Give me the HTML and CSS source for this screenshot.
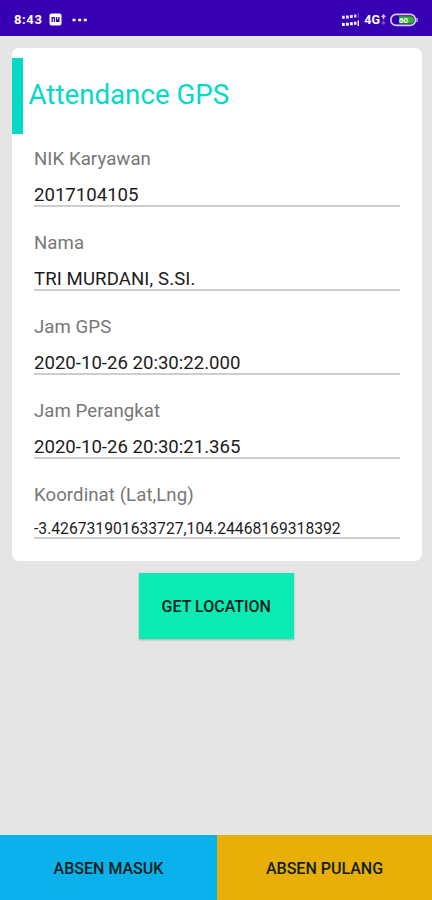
FILE: index.html
```
<!DOCTYPE html>
<html lang="id">
<head>
    <meta charset="UTF-8">
    <meta name="viewport" content="width=device-width, initial-scale=1.0">
    <title>Attendance GPS</title>
    <link rel="stylesheet" href="styles.css">
</head>
<body>
    <header class="status-bar">
        <div class="status-left">
            <span class="clock">8:43</span>
            <svg class="app-icon" width="13" height="13" viewBox="0 0 13 13">
                <rect x="0.5" y="0.5" width="12" height="12" rx="2" fill="#fff"/>
                <path d="M2.5 4h3.6v5H2.5zM7 4h3.5v5H7z" fill="#3700b3"/>
                <path d="M4.3 5.3v3.7M8.7 4v2.4" stroke="#fff" stroke-width="1"/>
            </svg>
            <svg class="more-icon" width="16" height="4" viewBox="0 0 16 4">
                <path d="M0.5 2h3M6.2 2h3M11.8 2h3" stroke="#fff" stroke-width="2.4"/>
            </svg>
        </div>
        <div class="status-right">
            <svg width="18" height="14" viewBox="0 0 18 14">
                <path d="M0 4.2h2.8M4 3.9h2.8M8 3.6h2.8M12 3.1h2.4" stroke="#e6dcff" stroke-width="3"/>
                <path d="M16.3 0v5" stroke="#7d5bd0"/>
                <path d="M0 11.6h2.8M4 11.3h2.8M8 10.8h2.8M12 10.3h2.4" stroke="#fff" stroke-width="3"/>
                <path d="M16.3 7.5v5.5" stroke="#fff" stroke-width="1.4"/>
            </svg>
            <span class="network">4G</span>
            <svg class="data-icon" width="5" height="12" viewBox="0 0 5 12">
                <path d="M2.5 0L5 3H3.3v2H1.7V3H0z" fill="#d5c8f5"/>
                <path d="M2.5 11L0 8.3h1.7V6.5h1.6v1.8H5z" fill="#7450cf"/>
            </svg>
            <svg class="battery" width="28" height="14" viewBox="0 0 28 14">
                <rect x="0.9" y="1.4" width="24.5" height="11" rx="5.2" fill="#3700b3" stroke="#d9ceff" stroke-width="1.6"/>
                <path d="M9 3.2h11.2a3.7 3.7 0 0 1 0 7.4H9z" fill="#2fb52b"/>
                <path d="M27 5v4" stroke="#d9ceff" stroke-width="1.2"/>
                <text class="battery-level" x="13.6" y="10.2" text-anchor="middle">60</text>
            </svg>
        </div>
    </header>

    <main class="content">
        <section class="card">
            <div class="card-header">
                <h1>Attendance GPS</h1>
            </div>
            <div class="field">
                <span class="field-label">NIK Karyawan</span>
                <div class="field-value">2017104105</div>
            </div>
            <div class="field">
                <span class="field-label">Nama</span>
                <div class="field-value name">TRI MURDANI, S.SI.</div>
            </div>
            <div class="field">
                <span class="field-label">Jam GPS</span>
                <div class="field-value">2020-10-26 20:30:22.000</div>
            </div>
            <div class="field">
                <span class="field-label">Jam Perangkat</span>
                <div class="field-value">2020-10-26 20:30:21.365</div>
            </div>
            <div class="field">
                <span class="field-label">Koordinat (Lat,Lng)</span>
                <div class="field-value small">-3.426731901633727,104.24468169318392</div>
            </div>
        </section>

        <button class="btn btn-location">GET LOCATION</button>
    </main>

    <footer class="actions">
        <button class="btn btn-in">ABSEN MASUK</button>
        <button class="btn btn-out">ABSEN PULANG</button>
    </footer>
</body>
</html>
```
FILE: styles.css
```
:root {
    --primary-dark: #3700b3;
    --accent: #03dac5;
    --bg-color: #e5e5e5;
}

* {
    box-sizing: border-box;
}

body {
    margin: 0;
    height: 900px;
    display: flex;
    flex-direction: column;
    font-family: Roboto, sans-serif;
    background: var(--bg-color);
    overflow: hidden;
}

/* Status bar */
.status-bar {
    height: 36px;
    padding: 3px 14px 0 14px;
    display: flex;
    justify-content: space-between;
    align-items: center;
    background: var(--primary-dark);
    color: #fff;
}

.status-left,
.status-right {
    display: flex;
    align-items: center;
}

.clock {
    font-size: 13px;
    font-weight: 700;
    letter-spacing: 0.6px;
}

.app-icon {
    margin-left: 7px;
}

.more-icon {
    margin-left: 10px;
}

.network {
    margin-left: 4px;
    font-size: 12.5px;
    font-weight: 700;
}

.data-icon {
    margin: 0 4px 0 1px;
}

.battery-level {
    font-size: 8px;
    font-weight: 700;
    fill: #fff;
}

/* Card */
.content {
    flex: 1;
    display: flex;
    flex-direction: column;
    align-items: center;
    padding: 12px 10px 0 11.5px;
}

.card {
    align-self: stretch;
    height: 513px;
    padding-top: 10px;
    border-radius: 7px;
    background: #fff;
}

.card-header {
    height: 76px;
    display: flex;
    align-items: center;
    padding: 0 0 3px 6px;
    border-left: 11.5px solid var(--accent);
}

.card-header h1 {
    margin: 0;
    font-size: 27.7px;
    font-weight: 400;
    color: var(--accent);
}

.field {
    height: 84px;
    margin: 0 22.5px;
    padding-top: 13px;
}

.field-label {
    display: block;
    height: 24px;
    line-height: 24px;
    font-size: 18.6px;
    letter-spacing: 0.08px;
    color: #777;
}

.field-value {
    height: 36px;
    padding-top: 12px;
    line-height: 24px;
    font-size: 18.6px;
    color: #1c1c1c;
    border-bottom: 2px solid #cdcdcd;
}

.field-value.name {
    letter-spacing: 0.1px;
}

.field-value.small {
    height: 32px;
    padding-top: 10px;
    font-size: 15.7px;
}

/* Buttons */
.btn {
    border: none;
    padding: 0;
    font-family: inherit;
    font-size: 16px;
    font-weight: 500;
    color: #10201c;
}

.btn-location {
    width: 155px;
    height: 66px;
    margin: 12px 1px 0 0;
    background: #0aebb3;
    box-shadow: 0 1px 2px rgba(0, 0, 0, 0.25);
}

.actions {
    display: flex;
    height: 65px;
}

.actions .btn {
    padding-top: 2px;
}

.btn-in {
    width: 217px;
    background: #0ab1eb;
}

.btn-out {
    flex: 1;
    background: #e8af08;
}
```
